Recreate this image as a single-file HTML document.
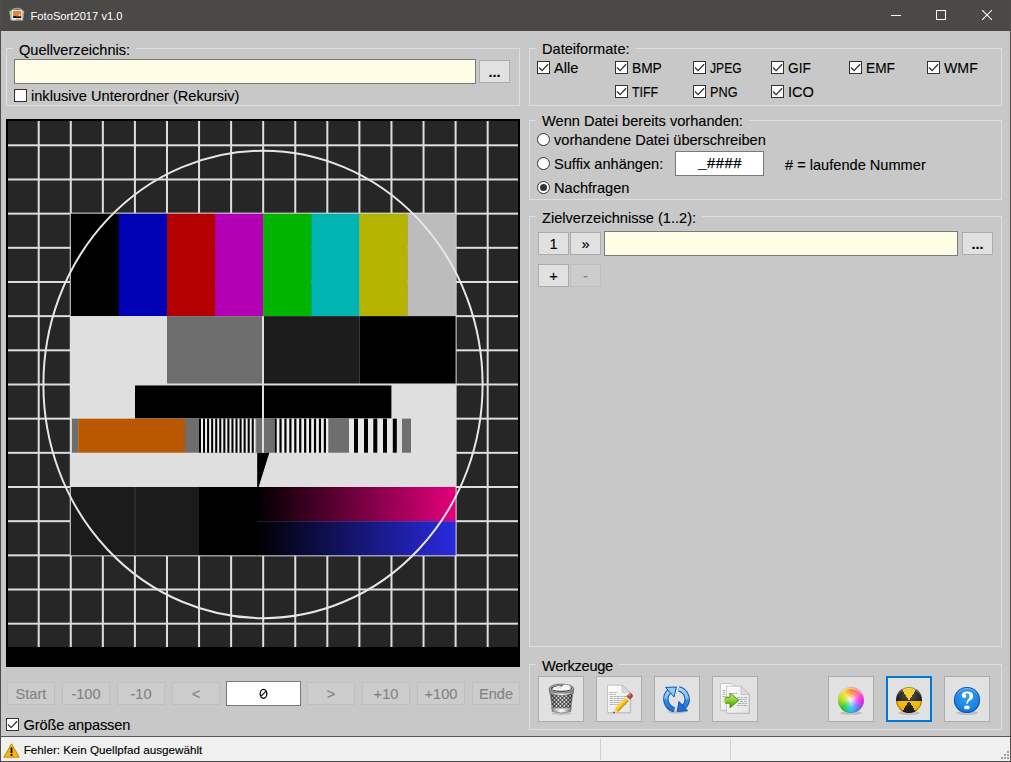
<!DOCTYPE html>
<html><head><meta charset="utf-8">
<style>
*{box-sizing:border-box;margin:0;padding:0}
html,body{width:1011px;height:762px;overflow:hidden;background:#c8c8c8}
body{position:relative;font-family:"Liberation Sans",sans-serif;font-size:14.6px;color:#000;-webkit-text-stroke:0.12px currentColor}
.a{position:absolute}
.t{position:absolute;line-height:16px;white-space:nowrap}
#frame{left:0;top:0;width:1011px;height:762px;border:1px solid #4f4d4b;border-top:none}
#title{left:0;top:0;width:1011px;height:31px;background:#4b4946}
.grp{position:absolute;border:1px solid #dedede}
.lbl{position:absolute;background:#c8c8c8;padding:0 6px;line-height:16px;white-space:nowrap}
.inp{position:absolute;background:#fffde5;border:1px solid #7a7a7a}
.btn{position:absolute;background:#e1e1e1;border:1px solid #adadad;text-align:center;line-height:23px}
.dis{position:absolute;background:#cccccc;border:1px solid #bfbfbf;text-align:center;color:#838383;line-height:23px}
.cb{position:absolute;width:13px;height:13px;background:#fff;border:1px solid #333}
.rb{position:absolute;width:13px;height:13px;background:#fff;border:1px solid #333;border-radius:50%}
</style></head><body>
<div class="a" id="title"></div>
<!-- title icon -->
<svg class="a" style="left:6px;top:4px" width="22" height="22" viewBox="6 4 22 22">
  <defs><linearGradient id="sky" x1="0" y1="0" x2="0" y2="1"><stop offset="0" stop-color="#c89060"/><stop offset="0.6" stop-color="#f07a20"/><stop offset="1" stop-color="#f0a030"/></linearGradient></defs>
  <path d="M12.5,9.6 Q17,7.2 21.5,9.6" fill="none" stroke="#9a9a9a" stroke-width="1.2"/>
  <rect x="10.2" y="10.8" width="5" height="9" transform="rotate(-8 12.7 15.3)" fill="#d8e8c8" stroke="#aaa" stroke-width="0.5"/>
  <rect x="10.9" y="11.6" width="1.4" height="4" fill="#78c030"/>
  <rect x="19" y="10.8" width="4.4" height="9" transform="rotate(8 21.2 15.3)" fill="#d0dce8" stroke="#aaa" stroke-width="0.5"/>
  <rect x="22" y="12.6" width="1.2" height="3" fill="#5a9ad0"/>
  <rect x="11.8" y="9.9" width="10.4" height="10.3" fill="#ececec" stroke="#b0b0b0" stroke-width="0.5"/>
  <rect x="13.1" y="10.9" width="8.1" height="7" fill="url(#sky)"/>
  <circle cx="19.5" cy="15.2" r="1" fill="#ffe070"/>
  <path d="M13.1,16.3 Q15,15.8 17,16.4 Q19,16 21.2,16.5 L21.2,17.9 L13.1,17.9Z" fill="#101010"/>
  <rect x="16" y="18.8" width="5" height="0.9" fill="#3a5a8a" opacity="0.6"/>
</svg>
<div class="t" style="left:30.5px;top:7.5px;font-size:11.2px;color:#fff;-webkit-text-stroke:0">FotoSort2017 v1.0</div>
<!-- window controls -->
<div class="a" style="left:891px;top:15px;width:10px;height:1px;background:#fff"></div>
<div class="a" style="left:936px;top:10px;width:10px;height:10px;border:1px solid #fff"></div>
<svg class="a" style="left:982px;top:10px" width="10" height="10" viewBox="0 0 10 10"><path d="M0,0 L10,10 M10,0 L0,10" stroke="#fff" stroke-width="1.1"/></svg>

<!-- Quellverzeichnis group -->
<div class="grp" style="left:6px;top:48px;width:514px;height:58px"></div>
<div class="lbl" style="left:13px;top:41.8px">Quellverzeichnis:</div>
<div class="inp" style="left:14px;top:59px;width:462px;height:25px"></div>
<div class="btn" style="left:479px;top:60px;width:31px;height:23px;font-weight:bold">...</div>
<div class="cb" style="left:14px;top:89px"></div>
<div class="t" style="left:31px;top:88px">inklusive Unterordner (Rekursiv)</div>

<!-- Dateiformate group -->
<div class="grp" style="left:529px;top:48px;width:473px;height:58px"></div>
<div class="lbl" style="left:536px;top:41.3px">Dateiformate:</div>
<svg class="a" style="left:537px;top:61px" width="13" height="13" viewBox="0 0 13 13"><rect x="0.5" y="0.5" width="12" height="12" fill="#fff" stroke="#333"/><path d="M2,6.5 L5.1,9.6 L11.1,3.3" fill="none" stroke="#333" stroke-width="1.3"/></svg>
<div class="t" style="left:554px;top:60px">Alle</div>
<svg class="a" style="left:615px;top:61px" width="13" height="13" viewBox="0 0 13 13"><rect x="0.5" y="0.5" width="12" height="12" fill="#fff" stroke="#333"/><path d="M2,6.5 L5.1,9.6 L11.1,3.3" fill="none" stroke="#333" stroke-width="1.3"/></svg>
<div class="t" style="left:632px;top:60px;transform:scaleX(0.94);transform-origin:0 0">BMP</div>
<svg class="a" style="left:693px;top:61px" width="13" height="13" viewBox="0 0 13 13"><rect x="0.5" y="0.5" width="12" height="12" fill="#fff" stroke="#333"/><path d="M2,6.5 L5.1,9.6 L11.1,3.3" fill="none" stroke="#333" stroke-width="1.3"/></svg>
<div class="t" style="left:710px;top:60px;transform:scaleX(0.83);transform-origin:0 0">JPEG</div>
<svg class="a" style="left:771px;top:61px" width="13" height="13" viewBox="0 0 13 13"><rect x="0.5" y="0.5" width="12" height="12" fill="#fff" stroke="#333"/><path d="M2,6.5 L5.1,9.6 L11.1,3.3" fill="none" stroke="#333" stroke-width="1.3"/></svg>
<div class="t" style="left:788px;top:60px;transform:scaleX(0.94);transform-origin:0 0">GIF</div>
<svg class="a" style="left:849px;top:61px" width="13" height="13" viewBox="0 0 13 13"><rect x="0.5" y="0.5" width="12" height="12" fill="#fff" stroke="#333"/><path d="M2,6.5 L5.1,9.6 L11.1,3.3" fill="none" stroke="#333" stroke-width="1.3"/></svg>
<div class="t" style="left:866px;top:60px;transform:scaleX(0.94);transform-origin:0 0">EMF</div>
<svg class="a" style="left:927px;top:61px" width="13" height="13" viewBox="0 0 13 13"><rect x="0.5" y="0.5" width="12" height="12" fill="#fff" stroke="#333"/><path d="M2,6.5 L5.1,9.6 L11.1,3.3" fill="none" stroke="#333" stroke-width="1.3"/></svg>
<div class="t" style="left:944px;top:60px;transform:scaleX(0.97);transform-origin:0 0">WMF</div>
<svg class="a" style="left:615px;top:85px" width="13" height="13" viewBox="0 0 13 13"><rect x="0.5" y="0.5" width="12" height="12" fill="#fff" stroke="#333"/><path d="M2,6.5 L5.1,9.6 L11.1,3.3" fill="none" stroke="#333" stroke-width="1.3"/></svg>
<div class="t" style="left:632px;top:83.8px;transform:scaleX(0.85);transform-origin:0 0">TIFF</div>
<svg class="a" style="left:693px;top:85px" width="13" height="13" viewBox="0 0 13 13"><rect x="0.5" y="0.5" width="12" height="12" fill="#fff" stroke="#333"/><path d="M2,6.5 L5.1,9.6 L11.1,3.3" fill="none" stroke="#333" stroke-width="1.3"/></svg>
<div class="t" style="left:710px;top:83.8px;transform:scaleX(0.87);transform-origin:0 0">PNG</div>
<svg class="a" style="left:771px;top:85px" width="13" height="13" viewBox="0 0 13 13"><rect x="0.5" y="0.5" width="12" height="12" fill="#fff" stroke="#333"/><path d="M2,6.5 L5.1,9.6 L11.1,3.3" fill="none" stroke="#333" stroke-width="1.3"/></svg>
<div class="t" style="left:788px;top:83.8px">ICO</div>

<!-- Wenn Datei group -->
<div class="grp" style="left:529px;top:120px;width:473px;height:80px"></div>
<div class="lbl" style="left:536px;top:113.1px">Wenn Datei bereits vorhanden:</div>
<div class="rb" style="left:537px;top:133px"></div>
<div class="t" style="left:554px;top:131.6px">vorhandene Datei überschreiben</div>
<div class="rb" style="left:537px;top:157px"></div>
<div class="t" style="left:554px;top:155.5px">Suffix anhängen:</div>
<div class="a" style="left:675px;top:151px;width:89px;height:25px;background:#fff;border:1px solid #7a7a7a"></div>
<div class="t" style="left:675px;width:89px;text-align:center;top:155.5px;font-family:'Liberation Mono',monospace;font-size:14.6px;-webkit-text-stroke:0.25px #000;padding-left:1px">_####</div>
<div class="t" style="left:785px;top:156.6px"># = laufende Nummer</div>
<div class="rb" style="left:537px;top:181px"></div>
<div class="a" style="left:540px;top:184px;width:7px;height:7px;border-radius:50%;background:#333"></div>
<div class="t" style="left:554px;top:179.8px">Nachfragen</div>

<!-- Zielverzeichnisse group -->
<div class="grp" style="left:529px;top:216px;width:473px;height:431px"></div>
<div class="lbl" style="left:536px;top:209.5px">Zielverzeichnisse (1..2):</div>
<div class="btn" style="left:538px;top:232px;width:31px;height:23px">1</div>
<div class="btn" style="left:570px;top:232px;width:31px;height:23px">»</div>
<div class="inp" style="left:604px;top:231px;width:354px;height:25px"></div>
<div class="btn" style="left:962px;top:232px;width:31px;height:23px;font-weight:bold">...</div>
<div class="btn" style="left:538px;top:264px;width:31px;height:23px">+</div>
<div class="dis" style="left:570px;top:264px;width:31px;height:23px">-</div>

<!-- Werkzeuge group -->
<div class="grp" style="left:529px;top:664px;width:473px;height:66px"></div>
<div class="lbl" style="left:536px;top:657.7px;letter-spacing:-0.3px">Werkzeuge</div>
<div class="btn" style="left:538px;top:676px;width:46px;height:46px"></div>
<div class="btn" style="left:596px;top:676px;width:46px;height:46px"></div>
<div class="btn" style="left:654px;top:676px;width:46px;height:46px"></div>
<div class="btn" style="left:712px;top:676px;width:46px;height:46px"></div>
<div class="btn" style="left:828px;top:676px;width:46px;height:46px"></div>
<div class="btn" style="left:886px;top:676px;width:46px;height:46px;border:2px solid #0078d7"></div>
<div class="btn" style="left:944px;top:676px;width:46px;height:46px"></div>

<!-- trash -->
<svg class="a" style="left:538px;top:676px" width="46" height="46" viewBox="538 676 46 46">
  <defs>
    <pattern id="mesh" width="2.8" height="2.8" patternUnits="userSpaceOnUse" patternTransform="rotate(45 561 700)">
      <rect width="2.8" height="2.8" fill="#ececec"/><rect width="1.0" height="2.8" fill="#3a3a3a"/><rect width="2.8" height="1.0" fill="#3a3a3a"/>
    </pattern>
    <linearGradient id="rimg" x1="0" x2="1"><stop offset="0" stop-color="#8a8a8a"/><stop offset="0.45" stop-color="#f4f4f4"/><stop offset="0.6" stop-color="#e8e8e8"/><stop offset="1" stop-color="#7a7a7a"/></linearGradient>
    <linearGradient id="shade" x1="0" x2="1"><stop offset="0" stop-color="#000" stop-opacity="0.35"/><stop offset="0.35" stop-color="#000" stop-opacity="0"/><stop offset="0.7" stop-color="#000" stop-opacity="0"/><stop offset="1" stop-color="#000" stop-opacity="0.35"/></linearGradient>
  </defs>
  <ellipse cx="561.5" cy="713.5" rx="10" ry="1.5" fill="#000" opacity="0.15"/>
  <path d="M550,692 L552.3,709 Q561.5,711.5 570.7,709 L573,692 Z" fill="url(#mesh)"/>
  <path d="M550,692 L552.3,709 Q561.5,711.5 570.7,709 L573,692 Z" fill="url(#shade)" stroke="#707070" stroke-width="0.6"/>
  <path d="M551.8,707 Q561.5,709.4 571.2,707 L570.8,711.6 Q561.5,714.3 552.2,711.6 Z" fill="url(#rimg)" stroke="#6a6a6a" stroke-width="0.6"/>
  <path d="M549.2,688.8 Q561.5,694 573.8,688.8 L573.4,693.2 Q561.5,698 549.6,693.2 Z" fill="url(#rimg)" stroke="#6a6a6a" stroke-width="0.6"/>
  <ellipse cx="561.5" cy="688.6" rx="12.3" ry="4.5" fill="#b8b8b8" stroke="#5a5a5a" stroke-width="0.8"/>
  <ellipse cx="561.5" cy="688.6" rx="10.8" ry="3.4" fill="#4a4a4a"/>
  <path d="M552,689.6 Q553.5,686 557,686.6 Q559,684.6 561.5,686.8 Q564,683.6 568,685 Q571.5,686.5 570.6,689.6 Q561.5,692 552,689.6Z" fill="#f8f8f8"/>
  <path d="M557.5,688.5 Q559,686.8 561,688.2" fill="none" stroke="#9a9a9a" stroke-width="0.6"/>
</svg>
<!-- doc with pencil -->
<svg class="a" style="left:596px;top:676px" width="46" height="46" viewBox="596 676 46 46">
  <defs><linearGradient id="pen" x1="0" y1="0" x2="0" y2="1"><stop offset="0" stop-color="#ffe35a"/><stop offset="0.5" stop-color="#f7c21a"/><stop offset="1" stop-color="#d98200"/></linearGradient>
  <linearGradient id="docg" x1="0" y1="0" x2="1" y2="1"><stop offset="0" stop-color="#ffffff"/><stop offset="1" stop-color="#e4e4e4"/></linearGradient></defs>
  <path d="M608.3,686 L622.3,686 L631.2,693.2 L631.2,713.4 L608.3,713.4 Z" fill="#000" opacity="0.12"/>
  <path d="M607.5,685.2 L622.1,685.2 L630.4,692.3 L630.4,712.6 L607.5,712.6 Z" fill="url(#docg)" stroke="#b4b4b4" stroke-width="0.7"/>
  <path d="M622.1,685.2 L622.1,692.3 L630.4,692.3 Z" fill="#dadada" stroke="#a8a8a8" stroke-width="0.5"/>
  <g stroke="#9c9c9c" stroke-width="0.8" stroke-dasharray="3.2 0.8 2 0.8">
    <path d="M609.7,692.5 H617.5"/><path d="M609.7,694.5 H616"/><path d="M609.7,696.5 H627.5"/><path d="M609.7,698.5 H627.5"/><path d="M609.7,700.5 H627.5"/><path d="M609.7,702.5 H627.5"/><path d="M609.7,704.5 H626"/>
  </g>
  <g transform="translate(613.3 713.4) rotate(-46)">
    <path d="M0,0 L4.4,-2.5 L4.4,2.5 Z" fill="#f2d6a8"/>
    <path d="M0,0 L1.6,-0.9 L1.6,0.9 Z" fill="#111"/>
    <rect x="4.4" y="-2.5" width="15.6" height="5" fill="url(#pen)"/>
    <rect x="20" y="-2.5" width="1.3" height="5" fill="#f4f4f4"/>
    <rect x="21.3" y="-2.5" width="1.7" height="5" fill="#5a5a5a"/>
    <path d="M23,-2.5 L25,-2.5 Q27,-2.5 27,0 Q27,2.5 25,2.5 L23,2.5 Z" fill="#c83a3a"/>
    <path d="M23,-2.3 L25,-2.3 Q26.4,-2.1 26.6,-0.6 L23,-0.6 Z" fill="#e87878"/>
  </g>
</svg>
<!-- refresh -->
<svg class="a" style="left:654px;top:676px" width="46" height="46" viewBox="654 676 46 46">
  <defs><linearGradient id="blu" gradientUnits="userSpaceOnUse" x1="0" y1="687" x2="0" y2="712"><stop offset="0" stop-color="#b4dcf8"/><stop offset="0.45" stop-color="#7cbcf0"/><stop offset="0.52" stop-color="#3c90e2"/><stop offset="1" stop-color="#1a68cc"/></linearGradient></defs>
  <ellipse cx="676.5" cy="712" rx="9" ry="1.6" fill="#000" opacity="0.15"/>
  <g fill="none">
    <path d="M674.30,709.57 A10.6,10.6 0 0 1 669.41,691.32" stroke="#0b55b8" stroke-width="5.4"/>
    <path d="M678.70,688.83 A10.6,10.6 0 0 1 683.59,707.08" stroke="#0b55b8" stroke-width="5.4"/>
    <path d="M674.30,709.57 A10.6,10.6 0 0 1 669.41,691.32" stroke="url(#blu)" stroke-width="3.4"/>
    <path d="M678.70,688.83 A10.6,10.6 0 0 1 683.59,707.08" stroke="url(#blu)" stroke-width="3.4"/>
  </g>
  <path d="M665.6,687.4 L676.4,687 L674,697 Z" fill="#94cbf4" stroke="#0b55b8" stroke-width="1" stroke-linejoin="round"/>
  <path d="M679,701.5 L677.2,711.4 L687.6,710.8 Z" fill="#1f6fd2" stroke="#0b55b8" stroke-width="1" stroke-linejoin="round"/>
</svg>
<!-- copy docs -->
<svg class="a" style="left:712px;top:676px" width="46" height="46" viewBox="712 676 46 46">
  <defs><linearGradient id="grn" x1="0" y1="0" x2="0" y2="1"><stop offset="0" stop-color="#d0f080"/><stop offset="0.5" stop-color="#8ccc30"/><stop offset="1" stop-color="#4a9a10"/></linearGradient>
  <linearGradient id="tail" x1="0" x2="1"><stop offset="0" stop-color="#a0d850" stop-opacity="0.2"/><stop offset="1" stop-color="#98d448"/></linearGradient>
  <linearGradient id="docg2" x1="0" y1="0" x2="1" y2="1"><stop offset="0" stop-color="#ffffff"/><stop offset="1" stop-color="#e2e2e2"/></linearGradient></defs>
  <path d="M721.3,684.3 L732.8,684.3 L738.3,689.3 L738.3,711.2 L721.3,711.2 Z" fill="#000" opacity="0.12"/>
  <path d="M720.5,683.5 L732,683.5 L737.5,688.5 L737.5,710.4 L720.5,710.4 Z" fill="url(#docg2)" stroke="#b8b8b8" stroke-width="0.7"/>
  <g stroke="#a0a0a0" stroke-width="0.8" stroke-dasharray="2.5 0.8"><path d="M722.5,690.5 H726"/><path d="M722.5,692.5 H725"/><path d="M722.5,694.5 H726"/><path d="M722.5,696.5 H726"/></g>
  <path d="M727.4,687 L741.8,687 L750,695.3 L750,714 L727.4,714 Z" fill="#000" opacity="0.15"/>
  <path d="M726.5,686.2 L741,686.2 L749.2,694.5 L749.2,713.2 L726.5,713.2 Z" fill="url(#docg2)" stroke="#b4b4b4" stroke-width="0.7"/>
  <path d="M741,686.2 L741,694.5 L749.2,694.5 Z" fill="#dcdcdc" stroke="#a8a8a8" stroke-width="0.5"/>
  <g stroke="#9c9c9c" stroke-width="0.8" stroke-dasharray="3 0.8 2 0.8"><path d="M731.5,693.5 H737"/><path d="M737.5,697.5 H747"/><path d="M739,699.5 H747"/><path d="M740,701.5 H747"/><path d="M738,703.5 H747"/><path d="M737,705.5 H747"/></g>
  <path d="M725.5,697.2 L730,697.2 L730,693 L738.9,700.2 L730,707.8 L730,703.2 L725.5,703.2 Z" fill="url(#grn)" stroke="#3c8a08" stroke-width="0.9" stroke-linejoin="round"/>
  <rect x="722.5" y="697.7" width="4" height="5" fill="url(#tail)"/>
</svg>
<!-- color wheel -->
<div class="a" style="left:851px;top:711px;width:0;height:0"></div>
<div class="a" style="left:840px;top:710.5px;width:22px;height:4px;border-radius:50%;background:rgba(0,0,0,0.15)"></div>
<div class="a" style="left:838px;top:687px;width:26px;height:26px;border-radius:50%;background:radial-gradient(circle at 50% 50%, rgba(255,255,255,0.9) 0, rgba(255,255,255,0.25) 35%, rgba(255,255,255,0) 60%), radial-gradient(circle at 50% 50%, rgba(0,0,0,0) 75%, rgba(0,0,0,0.18) 100%), conic-gradient(#ff8410 0deg, #ff5aa8 50deg, #ee18ee 95deg, #6a6af0 135deg, #28c4f0 180deg, #20cc30 225deg, #b0dc10 270deg, #f6dc30 315deg, #ff8410 360deg)"></div>
<div class="a" style="left:838px;top:687px;width:26px;height:26px;border-radius:50%;box-shadow:inset 0 0 0 1px rgba(0,0,0,0.12), inset 0 2px 1px 0 rgba(255,255,255,0.6)"></div>
<!-- radiation -->
<div class="a" style="left:898px;top:710.5px;width:22px;height:4px;border-radius:50%;background:rgba(0,0,0,0.15)"></div>
<div class="a" style="left:896px;top:687px;width:26px;height:26px;border-radius:50%;background:radial-gradient(circle at 50% 30%, rgba(255,255,255,0.25) 0, rgba(255,255,255,0) 60%), conic-gradient(from 0deg at 50% 53%, #f6c400 0deg, #f6c400 32deg, #1c1c1c 32deg, #1c1c1c 90deg, #f0b800 90deg, #f0b800 148deg, #222 148deg, #222 212deg, #f0b800 212deg, #f0b800 270deg, #1c1c1c 270deg, #1c1c1c 328deg, #f6c400 328deg)"></div>
<div class="a" style="left:896px;top:687px;width:26px;height:26px;border-radius:50%;box-shadow:inset 0 0 0 1px rgba(0,0,0,0.35), inset 0 2px 0 0 rgba(255,255,255,0.35)"></div>
<!-- help -->
<div class="a" style="left:956px;top:710.5px;width:22px;height:4px;border-radius:50%;background:rgba(0,0,0,0.15)"></div>
<div class="a" style="left:954px;top:687px;width:26px;height:26px;border-radius:50%;background:radial-gradient(circle at 50% 35%, #3aa0f0 0, #1b82e0 60%, #0c5ec4 100%);box-shadow:inset 0 0 0 1px #0a58b8, inset 0 2px 1px 0 rgba(180,225,255,0.7)"></div>
<svg class="a" style="left:954px;top:687px" width="26" height="26" viewBox="0 0 26 26">
  <path d="M7.8,8.4 Q8,4.6 13,4.6 Q19.2,4.6 19.2,9 Q19.2,11.8 15.8,13.6 Q14,14.8 13.7,16.8 L12.3,16.8 Q12,14 14.2,12.2 Q15.8,10.8 15.6,8.7 Q15.4,6.2 13.1,6.2 Q11.5,6.2 11.2,7.3 Q12.3,7.8 12.3,9.2 Q12.1,10.9 10.1,10.9 Q7.9,10.8 7.8,8.4Z" fill="#fff"/>
  <ellipse cx="12.9" cy="20.4" rx="2.8" ry="1.95" fill="#fff"/>
</svg>

<!-- test card -->
<svg style="position:absolute;left:6px;top:119px" width="514" height="548" viewBox="6 119 514 548" shape-rendering="auto">
<rect x="6" y="119" width="514" height="548" fill="#000"/>
<rect x="8" y="121" width="510" height="526" fill="#262626"/>
<rect x="37.70" y="121" width="2" height="526" fill="#dedede"/>
<rect x="69.77" y="121" width="2" height="526" fill="#dedede"/>
<rect x="101.84" y="121" width="2" height="526" fill="#dedede"/>
<rect x="133.91" y="121" width="2" height="526" fill="#dedede"/>
<rect x="165.98" y="121" width="2" height="526" fill="#dedede"/>
<rect x="198.05" y="121" width="2" height="526" fill="#dedede"/>
<rect x="230.12" y="121" width="2" height="526" fill="#dedede"/>
<rect x="262.19" y="121" width="2" height="526" fill="#dedede"/>
<rect x="294.26" y="121" width="2" height="526" fill="#dedede"/>
<rect x="326.33" y="121" width="2" height="526" fill="#dedede"/>
<rect x="358.40" y="121" width="2" height="526" fill="#dedede"/>
<rect x="390.47" y="121" width="2" height="526" fill="#dedede"/>
<rect x="422.54" y="121" width="2" height="526" fill="#dedede"/>
<rect x="454.61" y="121" width="2" height="526" fill="#dedede"/>
<rect x="486.68" y="121" width="2" height="526" fill="#dedede"/>
<rect x="8" y="144.30" width="510" height="2" fill="#dedede"/>
<rect x="8" y="178.47" width="510" height="2" fill="#dedede"/>
<rect x="8" y="212.64" width="510" height="2" fill="#dedede"/>
<rect x="8" y="246.81" width="510" height="2" fill="#dedede"/>
<rect x="8" y="280.98" width="510" height="2" fill="#dedede"/>
<rect x="8" y="315.15" width="510" height="2" fill="#dedede"/>
<rect x="8" y="349.32" width="510" height="2" fill="#dedede"/>
<rect x="8" y="383.49" width="510" height="2" fill="#dedede"/>
<rect x="8" y="417.66" width="510" height="2" fill="#dedede"/>
<rect x="8" y="451.83" width="510" height="2" fill="#dedede"/>
<rect x="8" y="486.00" width="510" height="2" fill="#dedede"/>
<rect x="8" y="520.17" width="510" height="2" fill="#dedede"/>
<rect x="8" y="554.34" width="510" height="2" fill="#dedede"/>
<rect x="8" y="588.51" width="510" height="2" fill="#dedede"/>
<rect x="8" y="622.68" width="510" height="2" fill="#dedede"/>
<rect x="70.80" y="213.64" width="48.40" height="102.51" fill="#000000"/>
<rect x="118.90" y="213.64" width="48.40" height="102.51" fill="#0000b4"/>
<rect x="167.00" y="213.64" width="48.40" height="102.51" fill="#b40000"/>
<rect x="215.10" y="213.64" width="48.40" height="102.51" fill="#b400b4"/>
<rect x="263.20" y="213.64" width="48.40" height="102.51" fill="#00b400"/>
<rect x="311.30" y="213.64" width="48.40" height="102.51" fill="#00b4b4"/>
<rect x="359.40" y="213.64" width="48.40" height="102.51" fill="#b4b400"/>
<rect x="407.50" y="213.64" width="48.40" height="102.51" fill="#bcbcbc"/>
<rect x="70.80" y="316.15" width="96.20" height="68.34" fill="#dfdfdf"/>
<rect x="167" y="316.15" width="96" height="68.34" fill="#6e6e6e"/>
<rect x="263" y="316.15" width="96.4" height="68.34" fill="#1c1c1c"/>
<rect x="359.4" y="316.15" width="96.20" height="68.34" fill="#000"/>
<rect x="70.80" y="384.49" width="384.80" height="34.17" fill="#dfdfdf"/>
<rect x="135" y="384.49" width="256.40" height="34.17" fill="#000"/>
<rect x="70.80" y="418.66" width="384.80" height="34.17" fill="#dfdfdf"/>
<rect x="71.90" y="418.66" width="6.30" height="34.17" fill="#6e6e6e"/>
<rect x="78.20" y="418.66" width="106.80" height="34.17" fill="#b85800"/>
<rect x="185.00" y="418.66" width="14.00" height="34.17" fill="#6e6e6e"/>
<rect x="199.00" y="418.66" width="57.30" height="34.17" fill="#000"/>
<rect x="201.00" y="418.66" width="2.00" height="34.17" fill="#f0f0f0"/>
<rect x="205.06" y="418.66" width="2.00" height="34.17" fill="#f0f0f0"/>
<rect x="209.12" y="418.66" width="2.00" height="34.17" fill="#f0f0f0"/>
<rect x="213.18" y="418.66" width="2.00" height="34.17" fill="#f0f0f0"/>
<rect x="217.24" y="418.66" width="2.00" height="34.17" fill="#f0f0f0"/>
<rect x="221.30" y="418.66" width="2.00" height="34.17" fill="#f0f0f0"/>
<rect x="225.36" y="418.66" width="2.00" height="34.17" fill="#f0f0f0"/>
<rect x="229.42" y="418.66" width="2.00" height="34.17" fill="#f0f0f0"/>
<rect x="233.48" y="418.66" width="2.00" height="34.17" fill="#f0f0f0"/>
<rect x="237.54" y="418.66" width="2.00" height="34.17" fill="#f0f0f0"/>
<rect x="241.60" y="418.66" width="2.00" height="34.17" fill="#f0f0f0"/>
<rect x="245.66" y="418.66" width="2.00" height="34.17" fill="#f0f0f0"/>
<rect x="249.72" y="418.66" width="2.00" height="34.17" fill="#f0f0f0"/>
<rect x="253.78" y="418.66" width="2.00" height="34.17" fill="#f0f0f0"/>
<rect x="256.30" y="418.66" width="18.20" height="34.17" fill="#6e6e6e"/>
<rect x="274.50" y="418.66" width="53.80" height="34.17" fill="#f0f0f0"/>
<rect x="274.50" y="418.66" width="2.20" height="34.17" fill="#000"/>
<rect x="279.43" y="418.66" width="2.20" height="34.17" fill="#000"/>
<rect x="284.36" y="418.66" width="2.20" height="34.17" fill="#000"/>
<rect x="289.29" y="418.66" width="2.20" height="34.17" fill="#000"/>
<rect x="294.22" y="418.66" width="2.20" height="34.17" fill="#000"/>
<rect x="299.15" y="418.66" width="2.20" height="34.17" fill="#000"/>
<rect x="304.08" y="418.66" width="2.20" height="34.17" fill="#000"/>
<rect x="309.01" y="418.66" width="2.20" height="34.17" fill="#000"/>
<rect x="313.94" y="418.66" width="2.20" height="34.17" fill="#000"/>
<rect x="318.87" y="418.66" width="2.20" height="34.17" fill="#000"/>
<rect x="323.80" y="418.66" width="2.20" height="34.17" fill="#000"/>
<rect x="328.30" y="418.66" width="20.70" height="34.17" fill="#6e6e6e"/>
<rect x="349.00" y="418.66" width="48.00" height="34.17" fill="#e8e8e8"/>
<rect x="354.00" y="418.66" width="4.00" height="34.17" fill="#000"/>
<rect x="364.00" y="418.66" width="4.00" height="34.17" fill="#000"/>
<rect x="373.30" y="418.66" width="4.00" height="34.17" fill="#000"/>
<rect x="383.00" y="418.66" width="4.00" height="34.17" fill="#000"/>
<rect x="392.80" y="418.66" width="4.00" height="34.17" fill="#000"/>
<rect x="402.00" y="418.66" width="9.00" height="34.17" fill="#6e6e6e"/>
<rect x="70.80" y="452.83" width="384.80" height="34.17" fill="#dfdfdf"/>
<polygon points="257.2,452.83 269.3,452.83 258.6,487.00 257.2,487.00" fill="#000"/>
<defs><linearGradient id="gm" x1="0" x2="1"><stop offset="0" stop-color="#000"/><stop offset="1" stop-color="#e3007c"/></linearGradient><linearGradient id="gb" x1="0" x2="1"><stop offset="0" stop-color="#000"/><stop offset="1" stop-color="#2a2ae0"/></linearGradient></defs>
<rect x="70.80" y="487.00" width="128.20" height="68.34" fill="#1b1b1b"/>
<rect x="134.5" y="487.00" width="1" height="68.34" fill="#3a3a3a"/>
<rect x="199" y="487.00" width="58" height="68.34" fill="#000"/>
<rect x="256" y="487.00" width="199.60" height="34.17" fill="url(#gm)"/>
<rect x="256" y="521.17" width="199.60" height="34.17" fill="url(#gb)"/>
<rect x="262" y="316.15" width="2" height="136.68" fill="#dedede"/>
<rect x="70.80" y="383.49" width="384.80" height="2" fill="#dedede"/>
<ellipse cx="263" cy="384.45" rx="219.6" ry="233.75" fill="none" stroke="#e6e6e6" stroke-width="2"/>
</svg>

<!-- nav buttons -->
<div class="dis" style="left:7px;top:682px;width:48px;height:23px">Start</div>
<div class="dis" style="left:62px;top:682px;width:48px;height:23px">-100</div>
<div class="dis" style="left:117px;top:682px;width:48px;height:23px">-10</div>
<div class="dis" style="left:172px;top:682px;width:48px;height:23px">&lt;</div>
<div class="a" style="left:226px;top:681px;width:75px;height:25px;background:#fff;border:1px solid #7a7a7a"></div>
<svg class="a" style="left:255px;top:685px" width="17" height="17" viewBox="255 685 17 17"><ellipse cx="263.5" cy="693.8" rx="3.3" ry="4.5" fill="none" stroke="#000" stroke-width="1.3"/><path d="M261.3,696.2 L265.7,691.4" stroke="#000" stroke-width="1.1"/></svg>
<div class="dis" style="left:307px;top:682px;width:48px;height:23px">&gt;</div>
<div class="dis" style="left:362px;top:682px;width:48px;height:23px">+10</div>
<div class="dis" style="left:417px;top:682px;width:48px;height:23px">+100</div>
<div class="dis" style="left:472px;top:682px;width:48px;height:23px">Ende</div>
<svg class="a" style="left:6px;top:718px" width="13" height="13" viewBox="0 0 13 13"><rect x="0.5" y="0.5" width="12" height="12" fill="#fff" stroke="#333"/><path d="M2,6.5 L5.1,9.6 L11.1,3.3" fill="none" stroke="#333" stroke-width="1.3"/></svg>
<div class="t" style="left:23.5px;top:716.5px;letter-spacing:-0.15px">Größe anpassen</div>

<!-- status bar -->
<div class="a" style="left:1px;top:736px;width:1009px;height:1px;background:#555"></div>
<div class="a" style="left:1px;top:737px;width:1009px;height:24px;background:#f0f0f0"></div>
<div class="a" style="left:600px;top:739px;width:1px;height:21px;background:#d0d0d0"></div>
<div class="a" style="left:730px;top:739px;width:1px;height:21px;background:#d0d0d0"></div>
<svg class="a" style="left:3px;top:743px" width="17" height="15" viewBox="0 0 17 15">
  <path d="M8.5,0.8 L16.2,14.2 L0.8,14.2 Z" fill="#f3b80f" stroke="#c98a00" stroke-width="1" stroke-linejoin="round"/>
  <rect x="7.6" y="4.5" width="1.8" height="5.5" fill="#000"/><rect x="7.6" y="11" width="1.8" height="1.8" fill="#000"/>
</svg>
<div class="t" style="left:23.7px;top:742.4px;font-size:11.7px">Fehler: Kein Quellpfad ausgewählt</div>
<!-- grip -->
<div class="a" style="left:1007px;top:751px;width:2px;height:2px;background:#a0a0a0"></div>
<div class="a" style="left:1004px;top:754px;width:2px;height:2px;background:#a0a0a0"></div>
<div class="a" style="left:1007px;top:754px;width:2px;height:2px;background:#a0a0a0"></div>
<div class="a" style="left:1001px;top:757px;width:2px;height:2px;background:#a0a0a0"></div>
<div class="a" style="left:1004px;top:757px;width:2px;height:2px;background:#a0a0a0"></div>
<div class="a" style="left:1007px;top:757px;width:2px;height:2px;background:#a0a0a0"></div>

<div class="a" id="frame"></div>
</body></html>
